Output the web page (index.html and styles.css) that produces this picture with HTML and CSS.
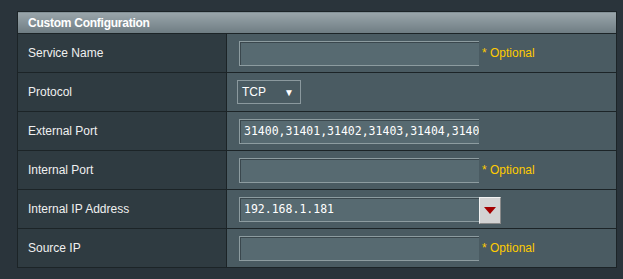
FILE: index.html
```html
<!DOCTYPE html>
<html lang="en">
<head>
    <meta charset="UTF-8">
    <title>Custom Configuration</title>
    <link rel="stylesheet" href="styles.css">
</head>
<body>
    <table class="config">
        <thead>
            <tr>
                <th colspan="2">Custom Configuration</th>
            </tr>
        </thead>
        <tbody>
            <tr>
                <td class="label">Service Name</td>
                <td class="value"><input class="field" type="text"><span class="hint">* Optional</span></td>
            </tr>
            <tr>
                <td class="label">Protocol</td>
                <td class="value">
                    <div class="select">TCP<span class="caret">&#9660;</span></div>
                </td>
            </tr>
            <tr>
                <td class="label">External Port</td>
                <td class="value"><input class="field" type="text" value="31400,31401,31402,31403,31404,31405"></td>
            </tr>
            <tr>
                <td class="label">Internal Port</td>
                <td class="value"><input class="field" type="text"><span class="hint">* Optional</span></td>
            </tr>
            <tr>
                <td class="label">Internal IP Address</td>
                <td class="value">
                    <input class="field" type="text" value="192.168.1.181"><button class="pick"><span class="tri"></span></button>
                </td>
            </tr>
            <tr>
                <td class="label">Source IP</td>
                <td class="value"><input class="field" type="text"><span class="hint">* Optional</span></td>
            </tr>
        </tbody>
    </table>
</body>
</html>
```

FILE: styles.css
```css
body {
    margin: 0;
    padding: 11px 0 0 17px;
    background-color: #2a343b;
    font-family: "Liberation Sans", Arial, sans-serif;
    font-size: 12px;
}
.config {
    width: 600px;
    border-collapse: collapse;
    border: 1px solid #1c2427;
}
.config th {
    height: 21px;
    padding: 0 0 0 10px;
    text-align: left;
    color: #fff;
    font-size: 12px;
    font-weight: bold;
    letter-spacing: -0.25px;
    background: linear-gradient(#9aa6ab, #6e7c82);
    border-bottom: 1px solid #1c2427;
}
.config td {
    height: 38px;
    padding: 0;
    border-bottom: 1px solid #1c2427;
}
.label {
    width: 198px;
    padding-left: 10px !important;
    color: #f0f0f0;
    background-color: #2f3b41;
    border-right: 1px solid #1c2427;
}
.value {
    padding-left: 12px !important;
    background-color: #4a5b62;
    white-space: nowrap;
}
.field {
    box-sizing: border-box;
    width: 240px;
    height: 25px;
    margin: 0;
    padding: 0 0 0 4px;
    vertical-align: middle;
    background-color: #576a71;
    border: 1px solid #8d9ca0;
    border-right: none;
    box-shadow: inset 0 1px 0 #3a474d, inset 1px 0 0 #3a474d;
    color: #fff;
    font-family: "DejaVu Sans Mono", monospace;
    font-size: 11.5px;
    outline: none;
}
.hint {
    margin-left: 3px;
    vertical-align: middle;
    color: #ffcc00;
}
.select {
    display: inline-flex;
    align-items: center;
    justify-content: space-between;
    box-sizing: border-box;
    width: 64px;
    height: 24px;
    margin-left: -2px;
    padding: 0 6px 0 4px;
    border: 1px solid #8b999e;
    color: #fff;
    font-size: 12px;
}
.caret {
    font-size: 10px;
}
.pick {
    box-sizing: border-box;
    width: 22px;
    height: 27px;
    margin: 0;
    padding: 0;
    vertical-align: middle;
    position: relative;
    top: 1px;
    background-color: #d3d3d3;
    border: 1px solid;
    border-color: #f2f2f2 #8a8a8a #8a8a8a #f2f2f2;
}
.tri {
    display: block;
    width: 0;
    height: 0;
    margin: 0 auto;
    border-left: 6px solid transparent;
    border-right: 6px solid transparent;
    border-top: 7px solid #a30000;
}
```
